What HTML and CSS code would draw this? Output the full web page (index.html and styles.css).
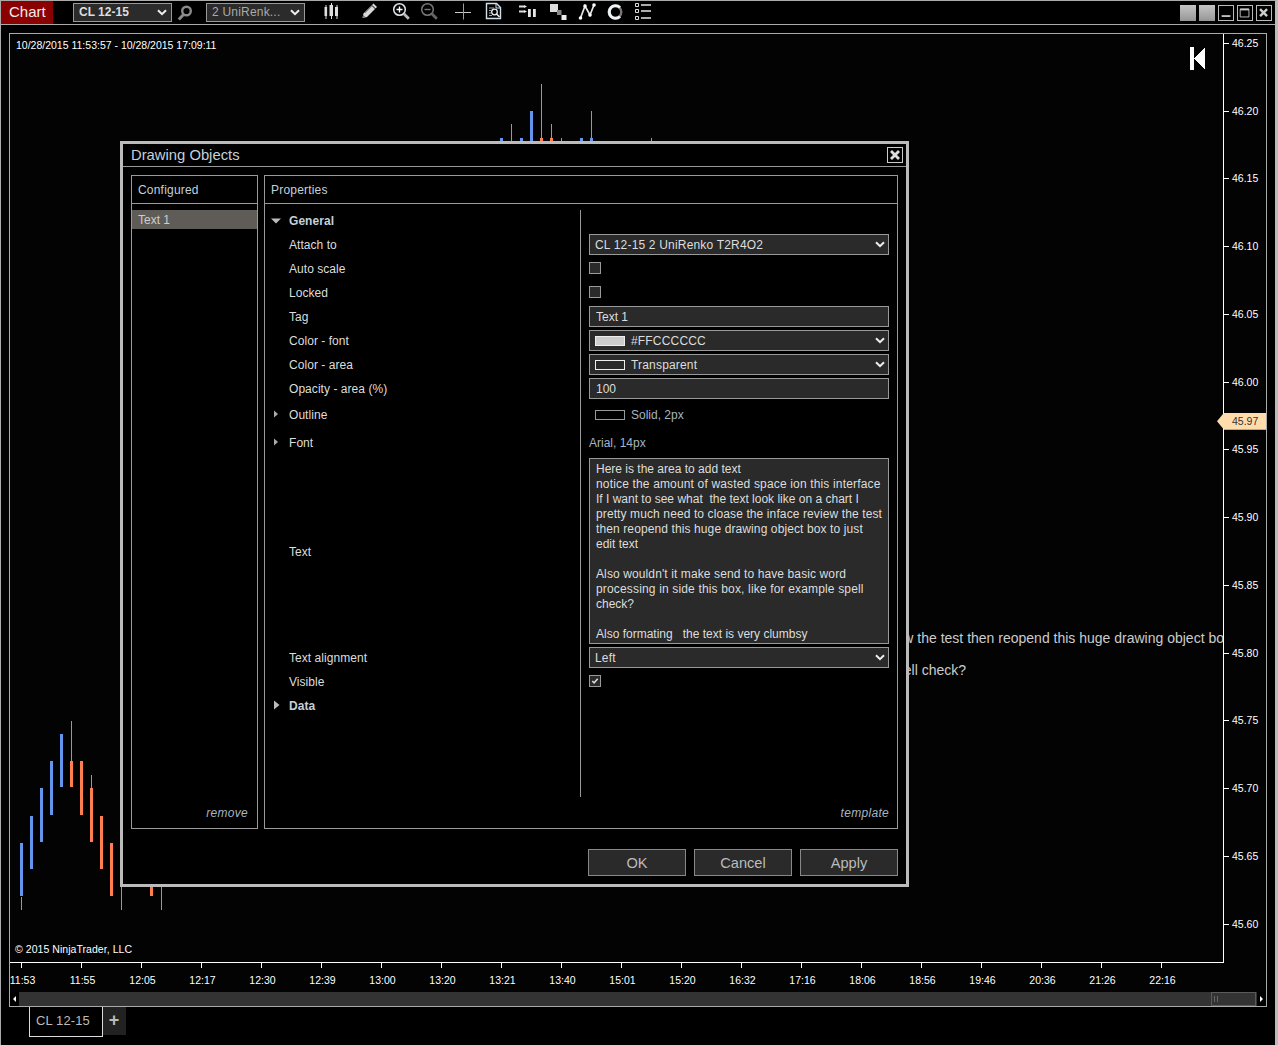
FILE: index.html
```html
<!DOCTYPE html>
<html lang="en">
<head>
<meta charset="utf-8">
<title>Chart</title>
<link rel="stylesheet" href="styles.css">
</head>
<body>
<div class="window">
  <header class="toolbar">
    <div class="app-title">Chart</div>
    <div class="tb-select tb-instrument"><span>CL 12-15</span><svg class="chev" viewBox="0 0 10 7"><path d="M1 1.2l4 4 4-4"/></svg></div>
    <svg class="search" viewBox="0 0 16 16"><circle cx="9.5" cy="6" r="4.3" fill="none" stroke="#8a8a8a" stroke-width="2.4"/><path d="M6.5 9.5L1.8 14.6" stroke="#8a8a8a" stroke-width="3"/></svg>
    <div class="tb-select tb-type"><span>2 UniRenk...</span><svg class="chev" viewBox="0 0 10 7"><path d="M1 1.2l4 4 4-4"/></svg></div>
    <div class="tools">
      <svg viewBox="0 0 18 18"><path d="M2 3v14M7.500 1v16M13 3v14" stroke="#ddd" stroke-width="1"/><rect x="0.500" y="5" width="2.600" height="9" fill="#ddd"/><rect x="5.500" y="3" width="3.500" height="11" fill="#ddd"/><rect x="11" y="5" width="3" height="9" fill="#ddd"/></svg>
      <svg viewBox="0 0 18 18"><path d="M1.500 16l1-4.500L12.500 1.500l3.500 3.500L6 15z" fill="#d8d8d8"/><path d="M11 3.500l3.500 3.500" stroke="#000" stroke-width="1"/><path d="M4 11l8-8" stroke="#888" stroke-width="1"/><path d="M1.500 16l.7-3 2.300 2.300z" fill="#777"/></svg>
      <svg viewBox="0 0 18 18"><circle cx="7.500" cy="7.500" r="5.800" fill="none" stroke="#dfe8f0" stroke-width="1.500"/><path d="M4.500 7.500h6M7.500 4.500v6" stroke="#fff" stroke-width="1.400"/><path d="M11.800 11.800l5 5" stroke="#bbb" stroke-width="2.800"/></svg>
      <svg viewBox="0 0 18 18"><circle cx="7.500" cy="7.500" r="5.800" fill="none" stroke="#777" stroke-width="1.500"/><path d="M4.500 7.500h6" stroke="#777" stroke-width="1.400"/><path d="M11.800 11.800l5 5" stroke="#666" stroke-width="2.800"/></svg>
      <svg viewBox="0 0 18 18"><path d="M1 10.500h16" stroke="#ccc" stroke-width="1"/><path d="M9.500 1.500v16" stroke="#6aa8e8" stroke-width="1"/></svg>
      <svg viewBox="0 0 18 18"><path d="M1.500 1.500h10l4 4v11h-14z" fill="none" stroke="#cfe0ea" stroke-width="1.400"/><path d="M11 1.500v4.500h4.500" fill="none" stroke="#cfe0ea"/><path d="M4 6h5M4 8.500h2M4 11h2M4 13.500h3" stroke="#aaa"/><circle cx="9.500" cy="10" r="2.800" fill="none" stroke="#eee" stroke-width="1.300"/><path d="M11.500 12l3 3" stroke="#eee" stroke-width="1.600"/></svg>
      <svg viewBox="0 0 18 18"><path d="M0 4.500h5M0 9.500h5" stroke="#ddd" stroke-width="2"/><path d="M5 3l3 1.500L5 6zM5 8l3 1.500L5 11z" fill="#eee"/><rect x="9" y="7" width="2.800" height="8" fill="#e6e6e6"/><rect x="14" y="7" width="2.800" height="8" fill="#e6e6e6"/></svg>
      <svg viewBox="0 0 18 18"><rect x="1" y="2" width="8" height="8" fill="#ddd"/><rect x="8" y="8" width="4.500" height="5" fill="#888"/><rect x="12.500" y="13" width="5" height="5" fill="#eee"/></svg>
      <svg viewBox="0 0 18 18"><path d="M2.500 16L7 4l5 9L16 3" fill="none" stroke="#e8e8e8" stroke-width="1.700"/><circle cx="2.500" cy="16" r="1.800" fill="#fff"/><circle cx="7" cy="4" r="1.800" fill="#fff"/><circle cx="12" cy="13" r="1.800" fill="#fff"/><circle cx="16" cy="3" r="1.800" fill="#fff"/></svg>
      <svg viewBox="0 0 18 18"><circle cx="9" cy="10" r="6.300" fill="none" stroke="#777" stroke-width="2.400"/><path d="M14 5.500A6.300 6.300 0 1 0 14 14.500" fill="none" stroke="#eef3f6" stroke-width="3"/></svg>
      <svg viewBox="0 0 18 18"><path d="M1.500 1.500h3v3h-3zM1.500 7.500h3v3h-3zM1.500 14.500h3v3h-3z" fill="none" stroke="#ddd"/><path d="M7 3h10M7 9h10M7 16h10" stroke="#e6e6e6" stroke-width="1.500"/></svg>
    </div>
    <div class="win-btns">
      <span class="win-btn win-gray"></span>
      <span class="win-btn win-gray"></span>
      <span class="win-btn"><svg viewBox="0 0 16 16"><path d="M3 11.500h10" stroke="#ccc" stroke-width="2"/></svg></span>
      <span class="win-btn"><svg viewBox="0 0 16 16"><path d="M2.500 3.500h10v9h-10z" fill="none" stroke="#ccc"/><path d="M2.500 4h10" stroke="#ccc" stroke-width="2"/></svg></span>
      <span class="win-btn"><svg viewBox="0 0 16 16"><path d="M3.500 3.500l8 8M11.500 3.500l-8 8" stroke="#ccc" stroke-width="2.800"/></svg></span>
    </div>
  </header>

  <main class="chart">
    <div class="chart-main">
      <div class="plot">
        <svg class="candles" viewBox="10 34 1213 928" shape-rendering="crispEdges">
          <g fill="#999">
            <rect x="21" y="897" width="1" height="13"/><rect x="71" y="721" width="1" height="40"/><rect x="91" y="775" width="1" height="13"/>
            <rect x="121" y="887" width="1" height="23"/><rect x="161" y="887" width="1" height="23"/>
            <rect x="511" y="124" width="1" height="17"/><rect x="541" y="84" width="1" height="54"/><rect x="551" y="124" width="1" height="14"/>
            <rect x="561" y="138" width="1" height="3"/><rect x="591" y="111" width="1" height="27"/><rect x="651" y="138" width="1" height="3"/>
          </g>
          <g fill="#6495ed">
            <rect x="20" y="843" width="3" height="53"/><rect x="30" y="816" width="3" height="53"/><rect x="40" y="788" width="3" height="54"/>
            <rect x="50" y="761" width="3" height="54"/><rect x="60" y="734" width="3" height="53"/>
            <rect x="500" y="138" width="3" height="3"/><rect x="520" y="138" width="3" height="3"/><rect x="530" y="111" width="3" height="30"/>
            <rect x="580" y="138" width="3" height="3"/><rect x="590" y="138" width="3" height="3"/>
          </g>
          <g fill="#ff7f50">
            <rect x="70" y="761" width="3" height="26"/><rect x="80" y="761" width="3" height="54"/><rect x="90" y="788" width="3" height="54"/>
            <rect x="100" y="816" width="3" height="53"/><rect x="110" y="843" width="3" height="53"/><rect x="150" y="887" width="3" height="9"/>
            <rect x="540" y="138" width="3" height="3"/><rect x="550" y="138" width="3" height="3"/>
          </g>
          <path d="M1190 47h4v23h-4zM1205 47v23l-11-11.500z" fill="#fff"/>
        </svg>
        <div class="range-label">10/28/2015 11:53:57 - 10/28/2015 17:09:11</div>
        <div class="copyright">© 2015 NinjaTrader, LLC</div>
        <div class="chart-text line-a">review the test then reopend this huge drawing object box to just edit text</div>
        <div class="chart-text line-b">spell check?</div>
      </div>
      <div class="price-axis">
        <div class="price">46.25</div><div class="price">46.20</div><div class="price">46.15</div><div class="price">46.10</div><div class="price">46.05</div><div class="price">46.00</div><div class="price">45.95</div><div class="price">45.90</div><div class="price">45.85</div><div class="price">45.80</div><div class="price">45.75</div><div class="price">45.70</div><div class="price">45.65</div><div class="price">45.60</div>
        <div class="price-marker">45.97</div>
      </div>
    </div>
    <div class="time-axis">
      <div class="time">11:53</div><div class="time">11:55</div><div class="time">12:05</div><div class="time">12:17</div><div class="time">12:30</div><div class="time">12:39</div><div class="time">13:00</div><div class="time">13:20</div><div class="time">13:21</div><div class="time">13:40</div><div class="time">15:01</div><div class="time">15:20</div><div class="time">16:32</div><div class="time">17:16</div><div class="time">18:06</div><div class="time">18:56</div><div class="time">19:46</div><div class="time">20:36</div><div class="time">21:26</div><div class="time">22:16</div>
    </div>
    <div class="scrollbar">
      <div class="scroll-btn"><svg viewBox="0 0 9 14"><path d="M3 7l3-3v6z" fill="#fff"/></svg></div>
      <div class="scroll-thumb"><i></i><i></i></div>
      <div class="scroll-btn"><svg viewBox="0 0 9 14"><path d="M6 7L3 4v6z" fill="#fff"/></svg></div>
    </div>
  </main>

  <footer class="tabs">
    <div class="tab">CL 12-15</div>
    <div class="tab-add">+</div>
  </footer>
</div>

<section class="dialog">
  <div class="dlg-title"><span>Drawing Objects</span><span class="dlg-close"><svg viewBox="0 0 14 14"><path d="M3 3l8 8M11 3l-8 8" stroke="#ddd" stroke-width="2.800"/></svg></span></div>
  <div class="dlg-body">
    <div class="panel panel-left">
      <div class="panel-head">Configured</div>
      <div class="list-item">Text 1</div>
      <div class="panel-foot foot-left">remove</div>
    </div>
    <div class="panel panel-right">
      <div class="panel-head">Properties</div>
      <div class="props">
        <div class="lbl section section-first"><svg class="tri" viewBox="0 0 10 10"><path d="M0 2.500h10L5 7.500z" fill="#bbb"/></svg>General</div><div class="val"></div>
        <div class="lbl">Attach to</div><div class="val"><div class="field select"><span>CL 12-15 2 UniRenko T2R4O2</span><svg class="chev" viewBox="0 0 10 7"><path d="M1 1.200l4 4 4-4"/></svg></div></div>
        <div class="lbl">Auto scale</div><div class="val"><span class="check"></span></div>
        <div class="lbl">Locked</div><div class="val"><span class="check"></span></div>
        <div class="lbl">Tag</div><div class="val"><div class="field input">Text 1</div></div>
        <div class="lbl">Color - font</div><div class="val"><div class="field select"><i class="swatch swatch-fill"></i><span>#FFCCCCCC</span><svg class="chev" viewBox="0 0 10 7"><path d="M1 1.200l4 4 4-4"/></svg></div></div>
        <div class="lbl">Color - area</div><div class="val"><div class="field select"><i class="swatch"></i><span>Transparent</span><svg class="chev" viewBox="0 0 10 7"><path d="M1 1.200l4 4 4-4"/></svg></div></div>
        <div class="lbl">Opacity - area (%)</div><div class="val"><div class="field input">100</div></div>
        <div class="lbl collapsed"><svg class="tri-sm" viewBox="0 0 6 10"><path d="M1 1.500l4 3.500-4 3.500z" fill="#aaa"/></svg>Outline</div><div class="val val-center val-swatch"><i class="swatch swatch-dim"></i><span class="muted">Solid, 2px</span></div>
        <div class="lbl collapsed"><svg class="tri-sm" viewBox="0 0 6 10"><path d="M1 1.500l4 3.500-4 3.500z" fill="#aaa"/></svg>Font</div><div class="val val-center"><span class="muted">Arial, 14px</span></div>
        <div class="lbl">Text</div><div class="val"><div class="textarea"><span class="tl">Here is the area to add text</span><span class="tl tr2">notice the amount of wasted space ion this interface</span><span class="tl">If I want to see what  the text look like on a chart I</span><span class="tl tr1">pretty much need to cloase the inface review the test</span><span class="tl tr1">then reopend this huge drawing object box to just</span><span class="tl">edit text</span><span class="tl tl-gap tr1">Also wouldn't it make send to have basic word</span><span class="tl tr2">processing in side this box, like for example spell</span><span class="tl">check?</span><span class="tl tl-gap">Also formating   the text is very clumbsy</span></div></div>
        <div class="lbl">Text alignment</div><div class="val"><div class="field select field-tight"><span>Left</span><svg class="chev" viewBox="0 0 10 7"><path d="M1 1.200l4 4 4-4"/></svg></div></div>
        <div class="lbl">Visible</div><div class="val"><span class="check checked"><svg viewBox="0 0 11 11"><path d="M2.500 5.500l2 2 4-4.500" fill="none" stroke="#ddd" stroke-width="1.600"/></svg></span></div>
        <div class="lbl section"><svg class="tri-lg" viewBox="0 0 10 10"><path d="M2 0.500l5.500 4.500L2 9.500z" fill="#bbb"/></svg>Data</div><div class="val"></div>
        <div class="lbl"></div><div class="val"></div>
      </div>
      <div class="panel-foot foot-right">template</div>
    </div>
  </div>
  <div class="dlg-actions">
    <button class="btn">OK</button>
    <button class="btn">Cancel</button>
    <button class="btn">Apply</button>
  </div>
</section>
</body>
</html>
```
FILE: styles.css
```css
* { box-sizing: border-box; }
html, body { margin: 0; padding: 0; }
body {
  position: relative;
  width: 1278px;
  height: 1045px;
  overflow: hidden;
  background: #000;
  color: #ddd;
  font-family: "Liberation Sans", Arial, sans-serif;
  font-size: 12px;
}
.window {
  width: 1278px;
  height: 1045px;
  border-top: 1px solid #aaa;
  border-left: 1px solid #aaa;
  border-right: 3px solid #bbb;
  display: flex;
  flex-direction: column;
}

/* toolbar */
.toolbar {
  height: 24px;
  flex: none;
  display: flex;
  align-items: center;
  border-bottom: 1px solid #aaa;
}
.app-title {
  width: 52px;
  height: 23px;
  background: #8b0000;
  color: #eee;
  font-size: 15px;
  line-height: 22px;
  padding-left: 8px;
}
.tb-select {
  height: 19px;
  width: 99px;
  border: 1px solid #999;
  background: #2b2b2b;
  display: flex;
  align-items: center;
  justify-content: space-between;
  padding: 0 4px 1px 5px;
  font-size: 12px;
  color: #ddd;
}
.tb-instrument { margin-left: 20px; font-weight: bold; }
.tb-type { color: #aaa; letter-spacing: .2px; }
.search { width: 16px; height: 16px; margin: 0 13px 0 5px; }
.chev { width: 10px; height: 7px; flex: none; }
.chev path { fill: none; stroke: #eee; stroke-width: 2; }
.tools {
  display: grid;
  grid-template-columns: 37px 31px 28px 34px 31px 34px 30px 29px 28px 28px 18px;
  margin: -3px 0 0 19px;
}
.tools svg { width: 18px; height: 18px; display: block; }
.win-btns { margin-left: auto; display: flex; gap: 3px; padding-right: 3px; }
.win-btn { width: 16px; height: 16px; border: 1px solid #bbb; display: block; }
.win-btn svg { width: 14px; height: 14px; display: block; }
.win-gray { border: 0; background: linear-gradient(#c4c4c4, #969696); }

/* chart */
.chart {
  margin: 8px 0 0 8px;
  width: 1258px;
  height: 974px;
  flex: none;
  border: 1px solid #aaa;
  display: flex;
  flex-direction: column;
  background: #030303;
}
.chart-main { display: flex; height: 929px; flex: none; }
.plot {
  position: relative;
  width: 1214px;
  height: 929px;
  border-right: 1px solid #fff;
  border-bottom: 1px solid #fff;
  overflow: hidden;
}
.candles { position: absolute; left: 0; top: 0; width: 1213px; height: 928px; display: block; }
.range-label, .copyright {
  position: absolute;
  left: 5px;
  font-size: 10.5px;
  color: #fff;
  white-space: nowrap;
}
.range-label { top: 5px; left: 6px; }
.copyright { top: 909px; letter-spacing: .05px; }
.chart-text {
  position: absolute;
  font-size: 14px;
  line-height: 16px;
  color: #ccc;
  white-space: nowrap;
}
.line-a { left: 863px; top: 596px; }
.line-b { left: 879px; top: 628px; }
.price-axis { position: relative; flex: 1; margin-top: -0.2px; }
.price {
  position: relative;
  height: 67.75px;
  padding-left: 8px;
  font-size: 10.5px;
  line-height: 18px;
  color: #fff;
}
.price::before {
  content: "";
  position: absolute;
  left: 0;
  top: 9px;
  width: 5px;
  height: 1px;
  background: #fff;
}
.price-marker {
  position: absolute;
  left: -7px;
  top: 379px;
  width: 49px;
  height: 17px;
  background: #ffdcac;
  color: #333;
  font-size: 10.5px;
  line-height: 17px;
  padding-left: 15px;
  clip-path: polygon(0 50%, 7px 0, 100% 0, 100% 100%, 7px 100%);
}
.time-axis {
  height: 29px;
  flex: none;
  display: flex;
  margin-left: -18px;
}
.time {
  position: relative;
  width: 60px;
  flex: none;
  text-align: center;
  font-size: 10.5px;
  line-height: 14px;
  padding: 10px 0 0 1px;
  color: #fff;
}
.time::before {
  content: "";
  position: absolute;
  left: 29px;
  top: 0;
  width: 1px;
  height: 5px;
  background: #fff;
}
.scrollbar {
  flex: 1;
  background: #333;
  display: flex;
  align-items: stretch;
}
.scroll-btn { width: 9px; background: #000; }
.scroll-btn svg { width: 9px; height: 14px; display: block; }
.scroll-thumb {
  margin-left: auto;
  margin-right: 1px;
  width: 45px;
  border: 1px solid #5a5a5a;
  display: flex;
  gap: 2px;
  padding: 3px 0 3px 2px;
}
.scroll-thumb i { width: 1px; background: #666; }

/* tabs */
.tabs { display: flex; margin-left: 28px; align-items: flex-start; }
.tab {
  width: 74px;
  height: 30px;
  border: 1px solid #ddd;
  border-top: 0;
  background: #000;
  color: #bbb;
  font-size: 13px;
  letter-spacing: .1px;
  line-height: 27px;
  padding-left: 6px;
}
.tab-add {
  width: 23px;
  height: 28px;
  background: #222;
  color: #bbb;
  font-size: 18px;
  font-weight: bold;
  line-height: 26px;
  text-align: center;
  padding-right: 1px;
}

/* dialog */
.dialog {
  position: absolute;
  left: 120px;
  top: 141px;
  width: 789px;
  height: 746px;
  border: 3px solid #bbb;
  background: #000;
  display: flex;
  flex-direction: column;
}
.dlg-title {
  height: 23px;
  flex: none;
  border-bottom: 1px solid #999;
  display: flex;
  align-items: center;
  justify-content: space-between;
  padding: 0 3px 0 8px;
  font-size: 14.8px;
  color: #c4d0dc;
}
.dlg-close {
  width: 16px;
  height: 16px;
  border: 1px solid #ccc;
  display: block;
}
.dlg-close svg { width: 14px; height: 14px; display: block; }
.dlg-body {
  display: flex;
  gap: 6px;
  padding: 8px 7px 0 8px;
}
.panel {
  position: relative;
  height: 654px;
  border: 1px solid #999;
}
.panel-left { width: 127px; }
.panel-right { width: 634px; }
.panel-head {
  height: 28px;
  border-bottom: 1px solid #999;
  line-height: 27px;
  padding: 1px 0 0 6px;
  letter-spacing: .2px;
  color: #c4d0dc;
}
.list-item {
  margin-top: 6px;
  height: 19px;
  line-height: 19px;
  padding: 1px 0 0 6px;
  background: #5f5c58;
  color: #ccc;
}
.panel-foot {
  position: absolute;
  bottom: 8px;
  font-style: italic;
  letter-spacing: .3px;
  color: #a6b4c2;
}
.foot-left { right: 9px; }
.foot-right { right: 8px; }

.props {
  margin-top: 6px;
  display: grid;
  grid-template-columns: 316px 300px;
  column-gap: 8px;
  grid-template-rows: 22px repeat(7, 24px) 28px 28px 190px 22px 26px 22px 81px;
}
.lbl {
  display: flex;
  align-items: center;
  padding: 2px 0 0 24px;
  letter-spacing: .05px;
  border-right: 1px solid #999;
  color: #ddd;
  position: relative;
}
.section { font-weight: bold; color: #c4d0dc; }
.section-first { padding-top: 0; }
.tri { position: absolute; left: 6px; top: 6px; width: 10px; height: 10px; }
.tri-lg { position: absolute; left: 7px; top: 6px; width: 10px; height: 10px; }
.tri-sm { position: absolute; left: 8px; top: 9px; width: 6px; height: 10px; }
.val { position: relative; }
.val-center { display: flex; align-items: center; padding-top: 2px; }
.val-swatch { padding-left: 6px; }
.field {
  height: 21px;
  margin-top: 2px;
  border: 1px solid #999;
  background: #2a2a2a;
  color: #ddd;
  display: flex;
  align-items: center;
}
.field-tight { margin-top: 1px; }
.select { padding: 0 3px 0 5px; }
.select span { flex: 1; letter-spacing: .18px; }
.input { padding-left: 6px; }
.check {
  display: block;
  width: 12px;
  height: 12px;
  margin-top: 6px;
  border: 1px solid #999;
  background: #2a2a2a;
}
.check svg { width: 10px; height: 10px; display: block; }
.checked { margin-top: 7px; }
.swatch {
  flex: none;
  display: block;
  width: 30px;
  height: 10px;
  border: 1px solid #eee;
  margin-right: 6px;
}
.swatch-fill { background: #ccc; }
.swatch-dim { border-color: #999; }
.muted { color: #a6b4c2; }
.textarea {
  height: 186px;
  margin-top: 2px;
  border: 1px solid #999;
  background: #2a2a2a;
  padding: 3px 6px;
  line-height: 15px;
  color: #ddd;
  overflow: hidden;
}
.tl { display: block; white-space: pre; }
.tl-gap { margin-top: 15px; }
.tr1 { letter-spacing: .11px; }
.tr2 { letter-spacing: .16px; }
.dlg-actions {
  display: flex;
  justify-content: flex-end;
  gap: 8px;
  padding: 20px 8px 0 0;
}
.btn {
  width: 98px;
  height: 27px;
  border: 1px solid #888;
  background: #2a2a2a;
  color: #bbb;
  font-family: inherit;
  font-size: 14.6px;
  padding: 0;
}
```
